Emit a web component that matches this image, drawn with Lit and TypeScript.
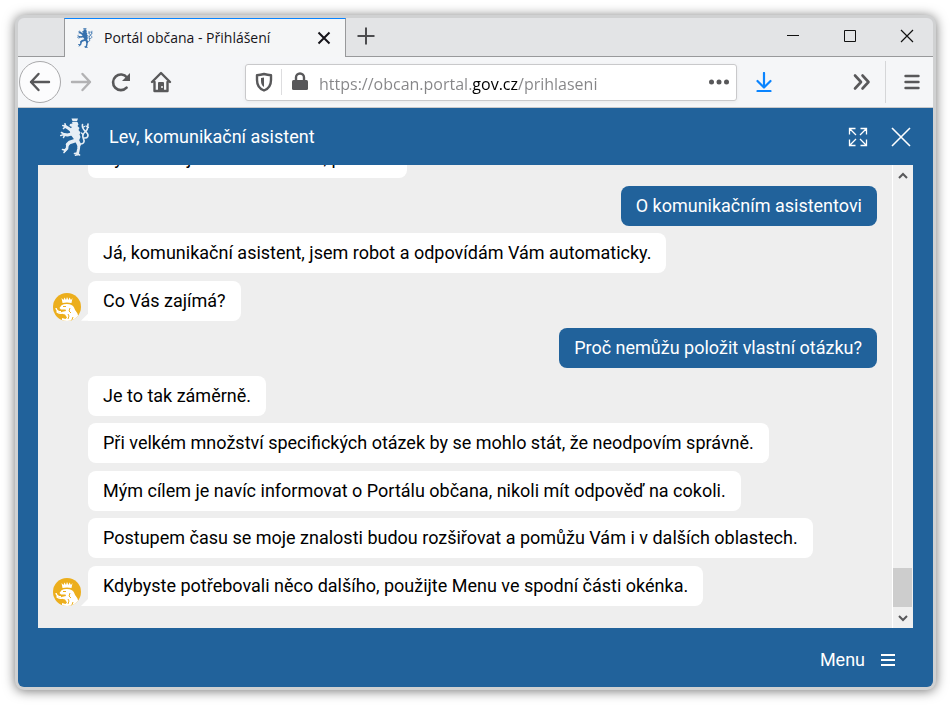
import { LitElement, html, css, svg, nothing } from "lit";
import { customElement, property } from "lit/decorators.js";

interface Message {
  text: string;
  own?: boolean;
  last?: boolean;
}

const MESSAGES: Message[] = [
  { text: "Vyberte si jednu z možností, prosím." },
  { text: "O komunikačním asistentovi", own: true },
  { text: "Já, komunikační asistent, jsem robot a odpovídám Vám automaticky." },
  { text: "Co Vás zajímá?", last: true },
  { text: "Proč nemůžu položit vlastní otázku?", own: true },
  { text: "Je to tak záměrně." },
  { text: "Při velkém množství specifických otázek by se mohlo stát, že neodpovím správně." },
  { text: "Mým cílem je navíc informovat o Portálu občana, nikoli mít odpověď na cokoli." },
  { text: "Postupem času se moje znalosti budou rozšiřovat a pomůžu Vám i v dalších oblastech." },
  { text: "Kdybyste potřebovali něco dalšího, použijte Menu ve spodní části okénka.", last: true },
];

const lion = (className: string) => svg`
  <svg class=${className} viewBox="0 0 30 38" aria-hidden="true">
    <g fill="currentColor">
      <path d="M11.500 0.500 H18 L17 3.300 H12.500 Z"/>
      <path d="M12 4 H17.500 L18.500 6.500 L17.500 8 L19.500 10 L18.500 12 L20.500 14.500 L19.500 16.500 L20.500 19 L19 22.500 L15 24 L13.500 20.500 L10.500 16.500 L9.500 11.500 L12 9 L9.500 8 L10 6 L12.500 5.500 Z"/>
    </g>
    <g fill="none" stroke="currentColor" stroke-linecap="round" stroke-linejoin="round">
      <path stroke-width="3" d="M11.500 12.500 L8 10 L5.500 8.500"/>
      <path stroke-width="3" d="M11.500 16 L7.500 17 L4.500 16.500"/>
      <path stroke-width="3.500" d="M15.500 22.500 L9.500 24.500 L7.500 26.500"/>
      <path stroke-width="2.600" d="M7.500 26.500 L7 30.500 L5 32.500"/>
      <path stroke-width="4" d="M17 22.500 L19 26.500"/>
      <path stroke-width="2.800" d="M19 27 L18.500 31 L17.500 36"/>
      <path stroke-width="1.600" d="M5.500 8 L5 5.800 M5.500 8.500 L2.800 7.500 M4.500 9.500 L3.500 10.500 M4 16 L1.500 14.500 M4 16.500 L0.800 17.500 M4.500 17.500 L3.500 19.500 M5 32 L2.500 31.500 M5.500 32.500 L4 34.500 M17.500 35 L14.500 35.500 M17.500 36.500 L15.500 37.200 M18 36 L19.500 37"/>
      <path stroke-width="1.600" d="M20 26 C23.500 26.500 25 23.500 23.500 21 C22 18 23 15.500 25.500 13.500 C28.500 11.500 27.500 9 28 6"/>
      <path stroke-width="1.600" d="M22.500 6.500 C21.500 10.500 24 12 26.500 14.500 C29.500 17.500 27.500 20.500 24 20"/>
      <path stroke-width="1.300" d="M24.500 8.500 L22.500 9.500 M26 8 L28.500 9.500 M21.500 15 L23 16.500"/>
    </g>
  </svg>`;

const avatar = svg`
  <svg class="avatar" viewBox="0 0 28 28" role="img" aria-label="Lev">
    <clipPath id="disc"><circle cx="14" cy="14" r="14"/></clipPath>
    <g clip-path="url(#disc)">
      <rect width="28" height="28" fill="#ecae1c"/>
      <path d="M8.500 5 L10.500 7 L11.500 4.500 L13 7 L14 4 L15.500 7 L16.500 4.500 L18 7 L19.500 5 L18.500 10 Q14 8.800 9.500 10 Z" fill="#fff"/>
      <path d="M8.500 12.200 Q11 10.800 14 11 Q19.500 11 21 14.500 Q22 17.500 23.500 19 Q25.500 21 25.500 28 H9 L9 25 L12.500 26 L14 24.500 L12 21.500 L8 20.500 L8.500 19 L13 18 L12.500 16.500 L8 16.500 L6.500 15 Z" fill="#fff"/>
      <path d="M3 15 Q3.500 18.500 8 18.800 M3.500 18.500 Q6 21 9 20" fill="none" stroke="#fff" stroke-width="1.400"/>
      <path d="M10 13.500 H13 M17 15 L16 18 L18 20 M15 21 L16 23 L15 26 M20 24 L18.500 28" stroke="#ecae1c" fill="none"/>
    </g>
  </svg>`;

@customElement("chat-message")
export class ChatMessage extends LitElement {
  @property() text = "";
  @property({ type: Boolean, reflect: true }) own = false;
  @property({ type: Boolean }) last = false;

  static styles = css`
    :host {
      display: flex;
      align-items: flex-end;
      flex: none;
    }
    :host([own]) {
      justify-content: flex-end;
    }
    .side {
      display: flex;
      justify-content: flex-start;
      width: 35px;
      flex: none;
    }
    .avatar {
      width: 28px;
      height: 28px;
      flex: none;
    }
    .tail {
      align-self: flex-end;
      width: 7px;
      height: 7px;
      background: #fff;
      clip-path: polygon(100% 0, 100% 100%, 0 100%);
    }
    .bubble {
      margin: 0;
      padding: 8px 15px;
      border-radius: 8px;
      background: #fff;
      color: #000;
      font: 18px/24px Roboto, "Liberation Sans", sans-serif;
    }
    .last {
      border-bottom-left-radius: 0;
    }
    .own {
      background: #21629b;
      color: #fff;
    }
  `;

  render() {
    return html`
      ${this.own
        ? nothing
        : html`<div class="side">${this.last ? html`${avatar}<span class="tail"></span>` : nothing}</div>`}
      <p class="bubble ${this.own ? "own" : ""} ${this.last ? "last" : ""}">${this.text}</p>
    `;
  }
}

@customElement("app-root")
export class AppRoot extends LitElement {
  static styles = css`
    :host {
      display: flex;
      box-sizing: border-box;
      min-height: 100vh;
      padding: 15px;
      background: #fff;
      font-family: "Open Sans", "Noto Sans", sans-serif;
    }
    * {
      box-sizing: border-box;
    }
    button {
      display: flex;
      align-items: center;
      justify-content: center;
      flex: none;
      margin: 0;
      padding: 0;
      border: 0;
      background: none;
      color: inherit;
    }
    svg {
      display: block;
      flex: none;
    }
    .window {
      display: flex;
      flex-direction: column;
      flex: 1;
      min-width: 0;
      border: 3px solid #d0d1d2;
      border-radius: 9px;
      background: #d0d1d2;
      box-shadow: 0 1px 12px rgba(0, 0, 0, 0.55);
    }
    .tabs {
      display: flex;
      height: 39px;
      border-radius: 6px 6px 0 0;
      background: #e3e4e6;
    }
    .lead {
      width: 46px;
      border-bottom: 1px solid #98999b;
    }
    .tab {
      display: flex;
      align-items: center;
      width: 282px;
      padding: 0 13px 0 12px;
      border: solid #98999b;
      border-width: 0 1px;
      border-top: 1px solid #0a84ff;
      background: #f5f6f7;
      color: #15141a;
    }
    .favicon {
      width: 16px;
      height: 20px;
      color: #3670ad;
    }
    .title {
      flex: 1;
      padding-left: 11px;
      font-size: 14px;
      line-height: 20px;
      white-space: nowrap;
    }
    .strip {
      display: flex;
      align-items: center;
      justify-content: space-between;
      flex: 1;
      padding: 0 19px 2px 11px;
      border-bottom: 1px solid #98999b;
      color: #4c4c4f;
    }
    .controls {
      display: flex;
      gap: 43px;
      color: #111;
    }
    .toolbar {
      display: flex;
      align-items: center;
      height: 51px;
      padding-left: 1px;
      border-bottom: 1px solid #c8c9cb;
      background: #f5f6f8;
      color: #58585a;
    }
    .back {
      width: 42px;
      height: 42px;
      border: 1px solid #a9a9ab;
      border-radius: 50%;
      background: #fcfcfd;
    }
    .nav {
      width: 40px;
      height: 40px;
    }
    .dim {
      color: #b2b2b4;
    }
    .address {
      display: flex;
      align-items: center;
      flex: 1;
      min-width: 0;
      height: 37px;
      margin-left: 64px;
      padding: 0 7px 0 9px;
      border: 1px solid #c9c9cb;
      border-radius: 3px;
      background: #fff;
      box-shadow: 0 1px 4px rgba(0, 0, 0, 0.06);
    }
    .split {
      width: 1px;
      height: 26px;
      margin: 0 10px 0 8px;
      background: #dddddf;
    }
    .url {
      flex: 1;
      min-width: 0;
      height: 34px;
      margin-left: 11px;
      padding: 4px 0 0;
      border: 0;
      outline: 0;
      background: linear-gradient(90deg, #858587 153px, #000 153px 199px, #858587 199px);
      background-clip: text;
      -webkit-background-clip: text;
      color: transparent;
      font: 16px/30px "Open Sans", "Noto Sans", sans-serif;
    }
    .tools {
      display: flex;
      align-items: center;
      height: 42px;
    }
    .download {
      width: 24px;
      margin-left: 15px;
      color: #0a84ff;
    }
    .more {
      width: 24px;
      margin: 0 11px 0 74px;
    }
    .main-menu {
      width: 48px;
      height: 42px;
      padding-left: 4px;
      border-left: 1px solid #d5d6d8;
    }
    .assistant {
      display: flex;
      flex-direction: column;
      flex: 1;
      padding: 0 20px;
      border-radius: 0 0 6px 6px;
      background: #21629b;
      color: #fff;
      font: 18px/24px Roboto, "Liberation Sans", sans-serif;
    }
    .header {
      display: flex;
      align-items: center;
      height: 57px;
      padding: 0 1px 0 22px;
    }
    .logo {
      width: 30px;
      height: 38px;
      color: #e6eef5;
    }
    .name {
      flex: 1;
      margin: 0;
      padding-left: 19px;
      font-size: 18px;
      font-weight: 400;
    }
    .actions {
      display: flex;
      gap: 22px;
    }
    .chat {
      display: flex;
      flex: 1;
      overflow: hidden;
      background: #eee;
    }
    .log {
      display: flex;
      flex-direction: column;
      justify-content: space-between;
      flex: 1;
      margin-top: -27px;
      padding: 0 15px 22px;
    }
    .scroll {
      display: flex;
      flex-direction: column;
      width: 21px;
      padding-right: 1px;
      border-left: 1px solid #fff;
      background: #f0f0f0;
      color: #58585a;
    }
    .arrow {
      height: 21px;
    }
    .track {
      display: flex;
      flex-direction: column;
      justify-content: flex-end;
      flex: 1;
    }
    .thumb {
      height: 39px;
      background: #cdcdcd;
    }
    .footer {
      display: flex;
      align-items: center;
      justify-content: flex-end;
      height: 59px;
      padding: 4px 18px 0 0;
    }
    .menu {
      gap: 16px;
      font: inherit;
    }
  `;

  render() {
    return html`
      <div class="window">
        <div class="tabs">
          <div class="lead"></div>
          <div class="tab">
            ${lion("favicon")}
            <span class="title">Portál občana - Přihlášení</span>
            <button aria-label="Zavřít panel">
              <svg width="16" height="16" fill="none" stroke="currentColor" stroke-width="2"><path d="M2.500 2.500 L13.500 13.500 M13.500 2.500 L2.500 13.500"/></svg>
            </button>
          </div>
          <div class="strip">
            <button aria-label="Nový panel">
              <svg width="18" height="18" fill="none" stroke="currentColor" stroke-width="2"><path d="M9 0.500 V17.500 M0.500 9 H17.500"/></svg>
            </button>
            <div class="controls">
              <button aria-label="Minimalizovat">
                <svg width="14" height="14" fill="none" stroke="currentColor"><path d="M1 6.500 H13"/></svg>
              </button>
              <button aria-label="Maximalizovat">
                <svg width="14" height="14" fill="none" stroke="currentColor"><path d="M1.500 1.500 H12.500 V12.500 H1.500 Z"/></svg>
              </button>
              <button aria-label="Zavřít okno">
                <svg width="14" height="14" fill="none" stroke="currentColor" stroke-width="1.200"><path d="M1 1 L13 13 M13 1 L1 13"/></svg>
              </button>
            </div>
          </div>
        </div>
        <div class="toolbar">
          <button class="back" aria-label="Zpět">
            <svg width="22" height="20" fill="none" stroke="currentColor" stroke-width="2.400" stroke-linecap="round" stroke-linejoin="round"><path d="M20 10 H2 M9.500 2 L2 10 L9.500 18"/></svg>
          </button>
          <button class="nav dim" aria-label="Vpřed">
            <svg width="22" height="20" fill="none" stroke="currentColor" stroke-width="2.400" stroke-linecap="round" stroke-linejoin="round"><path d="M2 10 H20 M12.500 2 L20 10 L12.500 18"/></svg>
          </button>
          <button class="nav" aria-label="Obnovit">
            <svg width="20" height="20" fill="none" stroke="currentColor" stroke-width="2.600" stroke-linecap="round"><path d="M15.600 15.600 A7.800 7.800 0 1 1 16 5.500 L17 7"/><path d="M19 1 V9 H11 Z" fill="currentColor" stroke="none"/></svg>
          </button>
          <button class="nav" aria-label="Domů">
            <svg width="22" height="22" fill="none" stroke="currentColor" stroke-width="2.400" stroke-linecap="round" stroke-linejoin="round"><path d="M2 11 L11 2 L20 11 M4.500 11 V20 H17.500 V11"/><path d="M8 19 V12 Q8 11 9 11 H13 Q14 11 14 12 V19 Z" fill="currentColor" stroke="none"/><path d="M11 16 h2" stroke="#f5f6f8" stroke-width="1.500" stroke-linecap="butt"/></svg>
          </button>
          <div class="address">
            <svg width="18" height="20" fill="none" stroke="currentColor" stroke-width="2.400" stroke-linejoin="round"><path d="M9 2 Q12.500 3 16 3.200 V8 C16 14 13 17 9 18.500 C5 17 2 14 2 8 V3.200 Q5.500 3 9 2 Z"/><path d="M9 5.500 V15 Q6 13 6 9 V6 Z" fill="currentColor" stroke="none"/></svg>
            <span class="split"></span>
            <svg width="16" height="20"><path d="M1.500 8 H14.500 Q16 8 16 9.500 V16.500 Q16 18 14.500 18 H1.500 Q0 18 0 16.500 V9.500 Q0 8 1.500 8 Z" fill="currentColor"/><path d="M4 8.500 V5.500 a4 4 0 0 1 8 0 V8.500" fill="none" stroke="currentColor" stroke-width="2.400"/></svg>
            <input class="url" aria-label="Adresa" value="https://obcan.portal.gov.cz/prihlaseni" spellcheck="false" />
            <button aria-label="Akce stránky">
              <svg width="20" height="6" fill="currentColor"><circle cx="2.500" cy="3" r="2.500"/><circle cx="10" cy="3" r="2.500"/><circle cx="17.500" cy="3" r="2.500"/></svg>
            </button>
          </div>
          <div class="tools">
            <button class="download" aria-label="Stahování">
              <svg width="16" height="20" fill="none" stroke="currentColor" stroke-width="2.200" stroke-linecap="round" stroke-linejoin="round"><path d="M8 1 V15 M1.500 9 L8 15.500 L14.500 9 M1.500 19 H14.500"/></svg>
            </button>
            <button class="more" aria-label="Další nástroje">
              <svg width="18" height="18" fill="none" stroke="currentColor" stroke-width="2.600" stroke-linecap="round" stroke-linejoin="round"><path d="M2 2.500 L8 9 L2 15.500 M9.500 2.500 L15.500 9 L9.500 15.500"/></svg>
            </button>
            <button class="main-menu" aria-label="Nabídka">
              <svg width="16" height="16" fill="none" stroke="currentColor" stroke-width="2.400" stroke-linecap="round"><path d="M1.500 2 H14.500 M1.500 8 H14.500 M1.500 14 H14.500"/></svg>
            </button>
          </div>
        </div>
        <main class="assistant">
          <header class="header">
            ${lion("logo")}
            <h1 class="name">Lev, komunikační asistent</h1>
            <div class="actions">
              <button aria-label="Zvětšit">
                <svg width="20" height="20" fill="none" stroke="currentColor" stroke-width="1.300"><path d="M7.500 1.500 H1.500 V7.500 M1.500 1.500 L8 8 M12.500 1.500 H18.500 V7.500 M18.500 1.500 L12 8 M7.500 18.500 H1.500 V12.500 M1.500 18.500 L8 12 M12.500 18.500 H18.500 V12.500 M18.500 18.500 L12 12"/></svg>
              </button>
              <button aria-label="Zavřít">
                <svg width="22" height="20" fill="none" stroke="currentColor" stroke-width="1.600"><path d="M2 1 L20 19 M20 1 L2 19"/></svg>
              </button>
            </div>
          </header>
          <section class="chat">
            <div class="log">
              ${MESSAGES.map(
                (m) => html`<chat-message .text=${m.text} .own=${!!m.own} .last=${!!m.last}></chat-message>`
              )}
            </div>
            <div class="scroll">
              <button class="arrow" aria-label="Posunout nahoru">
                <svg width="10" height="8" fill="none" stroke="currentColor" stroke-width="2"><path d="M1 6 L5 2 L9 6"/></svg>
              </button>
              <div class="track"><div class="thumb"></div></div>
              <button class="arrow" aria-label="Posunout dolů">
                <svg width="10" height="8" fill="none" stroke="currentColor" stroke-width="2"><path d="M1 2 L5 6 L9 2"/></svg>
              </button>
            </div>
          </section>
          <footer class="footer">
            <button class="menu">
              Menu
              <svg width="14" height="12" fill="none" stroke="currentColor" stroke-width="2"><path d="M0 1 H14 M0 6 H14 M0 11 H14"/></svg>
            </button>
          </footer>
        </main>
      </div>
    `;
  }
}
